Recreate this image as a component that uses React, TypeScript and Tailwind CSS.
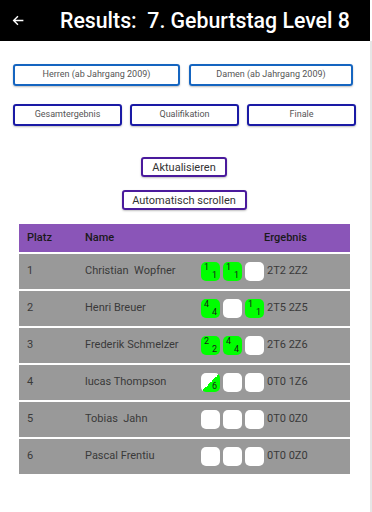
import React from 'react';

type Box = { kind: 'green' | 'white' | 'half'; top?: string; bottom?: string };

const rows: { platz: number; name: string; boxes: Box[]; result: string }[] = [
  {
    platz: 1,
    name: 'Christian  Wopfner',
    boxes: [
      { kind: 'green', top: '1', bottom: '1' },
      { kind: 'green', top: '1', bottom: '1' },
      { kind: 'white' },
    ],
    result: '2T2 2Z2',
  },
  {
    platz: 2,
    name: 'Henri Breuer',
    boxes: [
      { kind: 'green', top: '4', bottom: '4' },
      { kind: 'white' },
      { kind: 'green', top: '1', bottom: '1' },
    ],
    result: '2T5 2Z5',
  },
  {
    platz: 3,
    name: 'Frederik Schmelzer',
    boxes: [
      { kind: 'green', top: '2', bottom: '2' },
      { kind: 'green', top: '4', bottom: '4' },
      { kind: 'white' },
    ],
    result: '2T6 2Z6',
  },
  {
    platz: 4,
    name: 'lucas Thompson',
    boxes: [{ kind: 'half', bottom: '6' }, { kind: 'white' }, { kind: 'white' }],
    result: '0T0 1Z6',
  },
  {
    platz: 5,
    name: 'Tobias  Jahn',
    boxes: [{ kind: 'white' }, { kind: 'white' }, { kind: 'white' }],
    result: '0T0 0Z0',
  },
  {
    platz: 6,
    name: 'Pascal Frentiu',
    boxes: [{ kind: 'white' }, { kind: 'white' }, { kind: 'white' }],
    result: '0T0 0Z0',
  },
];

const BoulderBox: React.FC<{ box: Box }> = ({ box }) => {
  const bg =
    box.kind === 'green'
      ? 'bg-[#00ff00]'
      : box.kind === 'half'
      ? 'bg-[linear-gradient(135deg,#ffffff_50%,#00ff00_50%)]'
      : 'bg-white';
  return (
    <div className={`relative w-[19px] h-[19px] rounded-[5px] ${bg} text-[9px] leading-none text-[#1a1a1a]`}>
      {box.top && <span className="absolute left-[3px] top-[1px]">{box.top}</span>}
      {box.bottom && <span className="absolute right-[3px] bottom-[1px]">{box.bottom}</span>}
    </div>
  );
};

export default function App() {
  return (
    <div className="w-[372px] h-[512px] bg-white flex font-['Roboto',sans-serif] overflow-hidden">
      <div className="w-[370px] flex flex-col">
        <div className="h-[41px] bg-black flex items-center text-white">
          <svg className="ml-[12px] w-[13px] h-[13px]" viewBox="0 0 24 24" fill="none" stroke="white" strokeWidth="2.6">
            <path d="M21 12H3M11 4l-8 8 8 8" />
          </svg>
          <span className="ml-[35px] text-[21.3px] font-medium whitespace-pre">
            Results:  7. Geburtstag Level 8
          </span>
        </div>

        <div className="flex gap-[9px] pl-[13px] mt-[23px]">
          <button className="w-[167px] h-[22px] border-2 border-[#1565c0] rounded-[3px] shadow-[0_1px_2px_rgba(0,0,0,0.25)] text-[9px] text-[#555]">
            Herren (ab Jahrgang 2009)
          </button>
          <button className="w-[164px] h-[22px] border-2 border-[#1565c0] rounded-[3px] shadow-[0_1px_2px_rgba(0,0,0,0.25)] text-[9px] text-[#555]">
            Damen (ab Jahrgang 2009)
          </button>
        </div>

        <div className="flex gap-[8px] pl-[13px] mt-[18px]">
          {['Gesamtergebnis', 'Qualifikation', 'Finale'].map((t) => (
            <button
              key={t}
              className="w-[109px] h-[22px] border-2 border-[#1a1aa5] rounded-[3px] shadow-[0_1px_2px_rgba(0,0,0,0.25)] text-[9px] text-[#555]"
            >
              {t}
            </button>
          ))}
        </div>

        <div className="flex flex-col items-center mt-[31px] gap-[13px] pr-[2px]">
          <button className="w-[86px] h-[20px] border-2 border-[#4a1a9c] rounded-[3px] shadow-[0_1px_2px_rgba(0,0,0,0.25)] text-[11px] text-[#333] leading-none">
            Aktualisieren
          </button>
          <button className="w-[125px] h-[20px] border-2 border-[#4a1a9c] rounded-[3px] shadow-[0_1px_2px_rgba(0,0,0,0.25)] text-[11px] text-[#333] leading-none">
            Automatisch scrollen
          </button>
        </div>

        <div className="ml-[19px] w-[331px] mt-[14px] flex flex-col gap-[2px]">
          <div className="h-[28px] bg-[#8a55b8] flex items-center text-[11px] font-medium text-[#1a1a1a]">
            <span className="w-[66px] pl-[8px]">Platz</span>
            <span className="flex-1">Name</span>
            <span className="w-[86px]">Ergebnis</span>
          </div>
          {rows.map((r) => (
            <div key={r.platz} className="h-[35px] bg-[#999999] flex items-center text-[11px] text-[#3a3a3a]">
              <span className="w-[66px] pl-[8px]">{r.platz}</span>
              <span className="w-[116px] whitespace-pre">{r.name}</span>
              <div className="flex gap-[3px]">
                {r.boxes.map((b, i) => (
                  <BoulderBox key={i} box={b} />
                ))}
              </div>
              <span className="ml-[3px]">{r.result}</span>
            </div>
          ))}
        </div>
      </div>
      <div className="w-[2px] bg-[#e6e6e6] mt-[41px]" />
    </div>
  );
}
